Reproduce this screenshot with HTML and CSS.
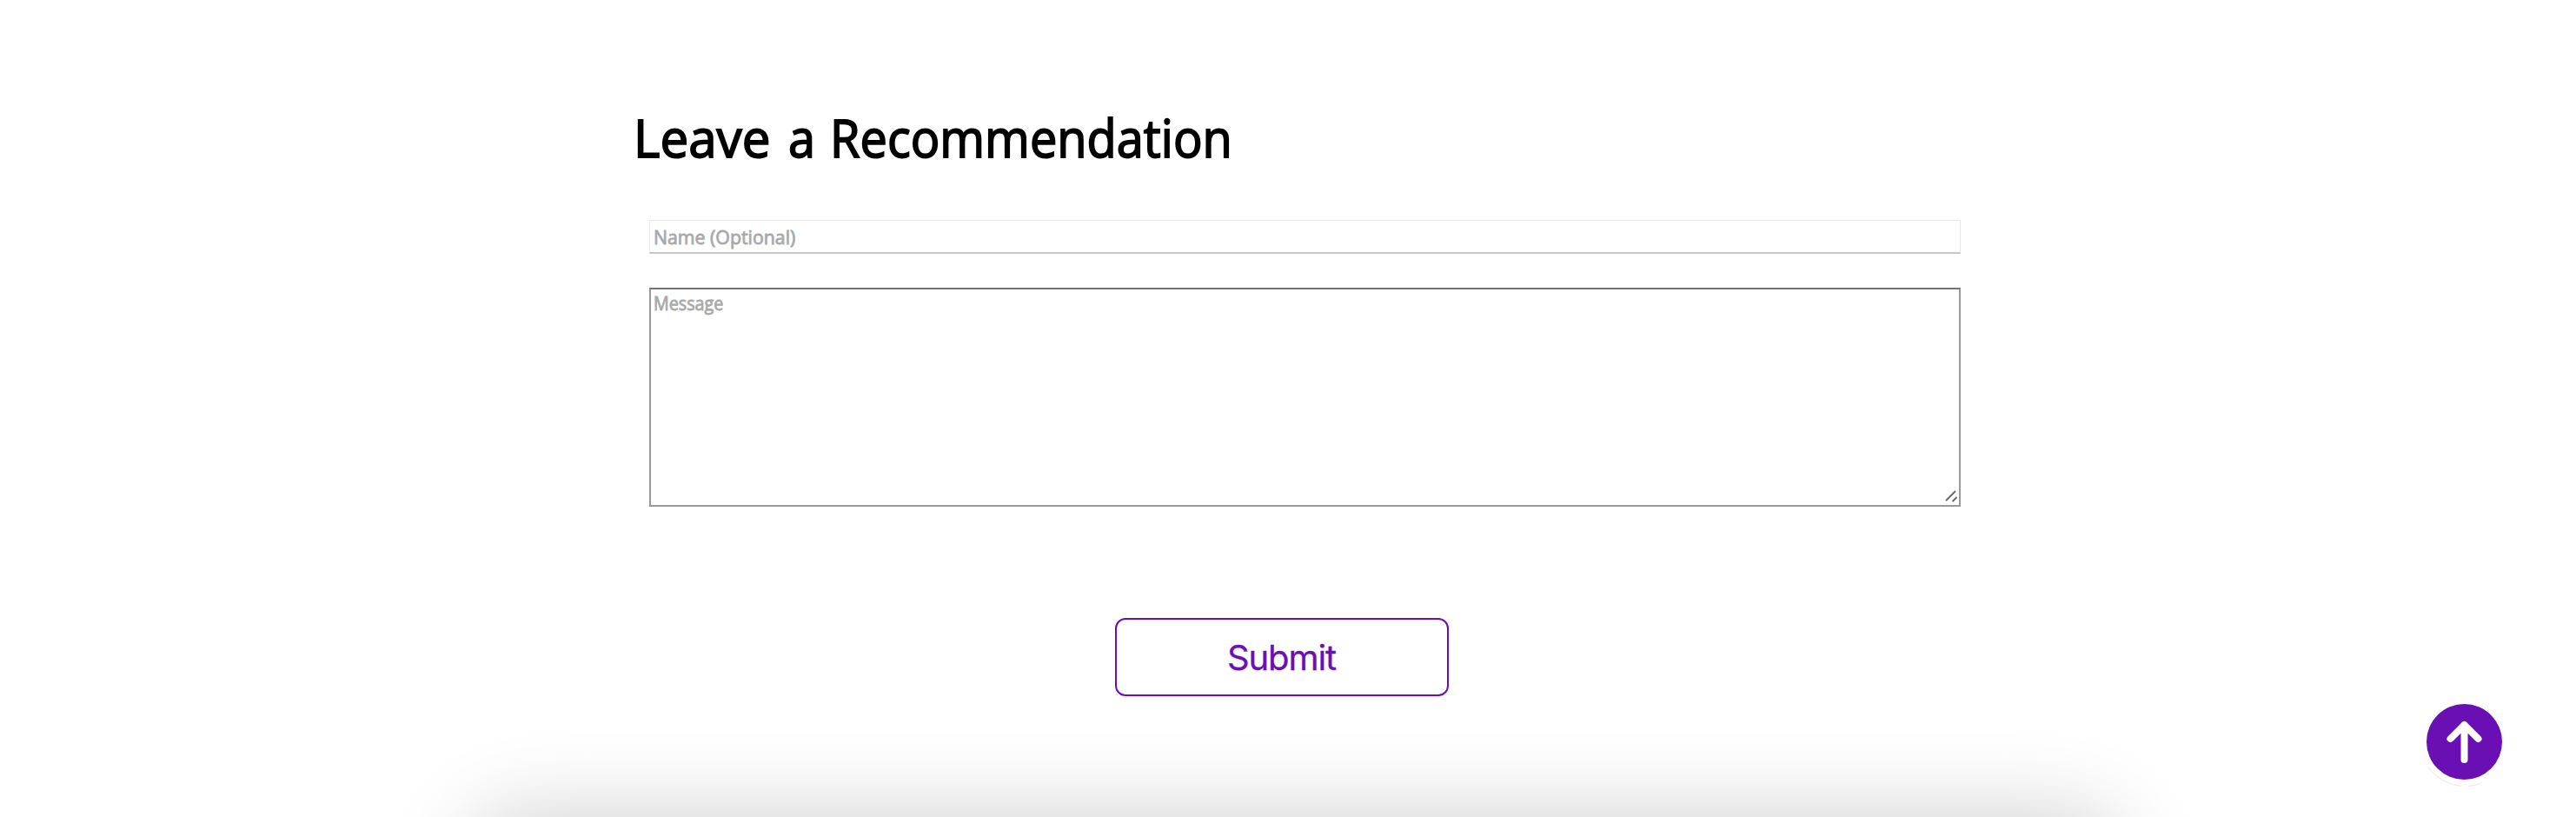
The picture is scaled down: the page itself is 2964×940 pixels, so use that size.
FILE: index.html
```html
<!DOCTYPE html>
<html lang="en">
<head>
<meta charset="utf-8">
<title>Leave a Recommendation</title>
<link rel="stylesheet" href="styles.css">
</head>
<body>
<main class="page">
  <form class="form">
    <h1 class="title"><span class="title-lead">Leave</span> <span class="title-mid">a</span> <span class="title-long">Recommendation</span></h1>
    <div class="field field-name"><span class="hint hint-name">Name (Optional)</span></div>
    <div class="field field-message">
      <span class="hint hint-message">Message</span>
      <svg class="grip" width="16" height="16" viewBox="0 0 16 16"><path d="M2 13 13 2M9.500 14 14.500 9"/></svg>
    </div>
    <button class="submit" type="button"><span>Submit</span></button>
  </form>
  <div class="next-card"></div>
</main>
<a class="to-top" href="#" aria-label="Back to top">
  <svg width="87" height="96" viewBox="0 0 87 96"><path d="M43.500 64V24M27.500 40 43.500 24 59.500 40"/><path class="rim" d="M2 73Q17 92 39 94.500M49 94.500Q57 93.500 63 91"/></svg>
</a>
</body>
</html>
```
FILE: styles.css
```css
* { box-sizing: border-box; }
body { margin: 0; background: #fff; overflow: hidden; }
.page { height: 940px; overflow: hidden; font-family: "Open Sans", "Noto Sans", sans-serif; }
.form {
  width: 1509px;
  height: 940px;
  margin-left: 747px;
  padding-top: 117px;
  display: flex;
  flex-direction: column;
}
.title {
  margin: 0 0 0 -18px;
  height: 82px;
  line-height: 82px;
  font-size: 60px;
  font-weight: 500;
  color: #000;
  white-space: nowrap;
  -webkit-text-stroke: 1.8px #000;
}
.title span { display: inline-block; transform-origin: 0 50%; }
.title-lead { transform: scaleX(.972); }
.title-mid { transform: scaleX(.93); }
.title-long { margin-left: -1px; transform: scaleX(.932); }
.field { position: relative; width: 1509px; }
.field-name {
  height: 39px;
  margin-top: 54px;
  padding: 4px 0 0 4px;
  border: 1px solid #e8e8e8;
  border-bottom: 2px solid #c6c6c6;
}
.hint {
  display: block;
  width: max-content;
  line-height: 30px;
  font-size: 21.3px;
  font-weight: 500;
  color: #a9a9a9;
  white-space: nowrap;
  -webkit-text-stroke: .8px #a9a9a9;
}
.hint-message { transform: scaleX(.925); transform-origin: 0 50%; }
.field-message {
  height: 252px;
  margin-top: 39px;
  padding: 1px 0 0 3px;
  border: 2px solid #999;
  border-top-color: #717171;
}
.grip {
  position: absolute;
  right: 1px;
  bottom: 2px;
  fill: none;
  stroke: #666;
  stroke-width: 1.8;
}
.submit {
  width: 384px;
  height: 90px;
  margin: 128px 0 0 536px;
  padding: 2px 0 0;
  border: 2px solid #6a0fb4;
  border-radius: 12px;
  background: #fff;
  color: #6a0fb4;
  font: 400 40px/84px Inter, sans-serif;
  letter-spacing: -1.1px;
  -webkit-text-stroke: .3px #6a0fb4;
}
.submit span { margin-left: -1px; }
.next-card {
  width: 1892px;
  height: 400px;
  margin-left: 544px;
  border-radius: 50px;
  box-shadow: 0 0 100px rgba(0, 0, 0, .2);
}
.to-top {
  position: fixed;
  left: 2791.5px;
  top: 810.4px;
  width: 87px;
  height: 87px;
  border-radius: 50%;
  background: #6a0fb4;
}
.to-top svg {
  display: block;
  fill: none;
  stroke: #fff;
  stroke-width: 8;
  stroke-linecap: round;
  stroke-linejoin: round;
}
.to-top .rim { stroke: #e3d2f1; stroke-width: .7; }
```
